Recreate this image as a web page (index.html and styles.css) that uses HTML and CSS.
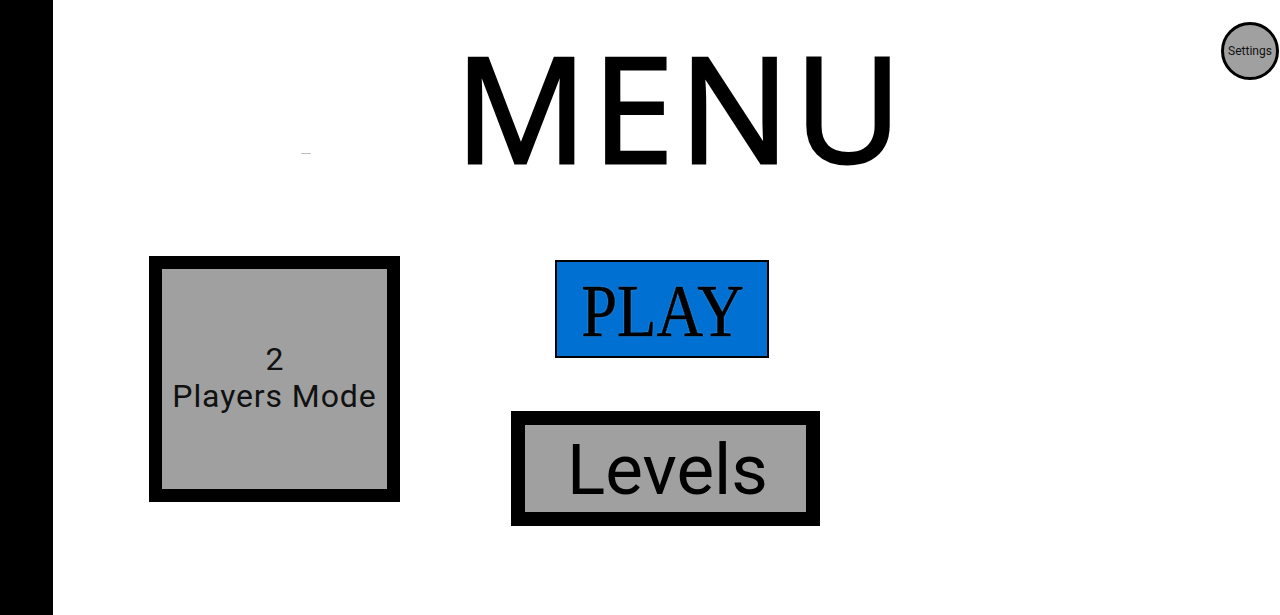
FILE: index.html
```html
<!DOCTYPE html>
<html>
<head>
<meta charset="utf-8">
<link rel="stylesheet" href="styles.css">
</head>
<body>
<div class="app">
  <div class="sidebar"></div>
  <main class="main">
    <h1 class="title">MENU</h1>
    <span class="speck"></span>
    <div class="content">
      <div class="mode-box">
        <span class="mode-num">2</span>
        <span class="mode-label">Players Mode</span>
      </div>
      <div class="actions">
        <div class="play"><span class="play-text">PLAY</span></div>
        <div class="levels">Levels</div>
      </div>
    </div>
    <div class="settings">Settings</div>
  </main>
</div>
</body>
</html>
```
FILE: styles.css
```css
html, body {
  margin: 0;
  padding: 0;
  background: #ffffff;
}
.app {
  display: flex;
  width: 1280px;
  height: 615px;
  overflow: hidden;
}
.sidebar {
  width: 53px;
  flex: none;
  background: #000000;
}
.main {
  position: relative;
  flex: 1;
  font-family: Roboto, "Liberation Sans", sans-serif;
  color: #000;
}
.title {
  margin: 0;
  padding-left: 402px;
  padding-top: 33px;
  height: 172px;
  box-sizing: border-box;
  font-family: "Open Sans", sans-serif;
  font-weight: 400;
  font-size: 147px;
  line-height: 1;
  letter-spacing: 5px;
  -webkit-text-stroke: 3px #000;
  color: #000;
  white-space: nowrap;
}
.speck {
  position: absolute;
  left: 248px;
  top: 153px;
  width: 10px;
  height: 1px;
  background: #bdbdbd;
}
.content {
  display: flex;
  align-items: flex-start;
  padding-left: 96px;
  margin-top: 84px;
}
.mode-box {
  width: 251px;
  height: 246px;
  box-sizing: border-box;
  border: 13px solid #000;
  background: #a0a0a0;
  display: flex;
  flex-direction: column;
  align-items: center;
  justify-content: center;
  font-size: 32px;
  line-height: 37px;
  color: #111;
  padding-bottom: 3px;
}
.mode-label {
  letter-spacing: 0.9px;
}
.actions {
  margin-left: 111px;
  display: flex;
  flex-direction: column;
  align-items: flex-start;
}
.play {
  margin-top: 4px;
  margin-left: 44px;
  width: 214px;
  height: 98px;
  box-sizing: border-box;
  border: 2px solid #000;
  background: #0070d2;
  display: flex;
  align-items: center;
  justify-content: center;
}
.play-text {
  font-family: "Liberation Serif", serif;
  font-size: 75px;
  line-height: 1;
  display: inline-block;
  transform: scaleX(0.86);
  color: #000;
  -webkit-text-stroke: 0.6px #000;
  text-shadow: 0 0 2px rgba(200, 220, 240, 0.6);
  padding-top: 2px;
}
.levels {
  margin-top: 53px;
  width: 309px;
  height: 115px;
  box-sizing: border-box;
  border: 14px solid #000;
  background: #a0a0a0;
  display: flex;
  align-items: center;
  justify-content: center;
  font-size: 71px;
  line-height: 1;
  color: #000;
  padding-top: 2px;
  padding-left: 4px;
}
.settings {
  position: absolute;
  top: 22px;
  right: 1px;
  width: 58px;
  height: 58px;
  box-sizing: border-box;
  border: 3px solid #000;
  border-radius: 50%;
  background: #a0a0a0;
  display: flex;
  align-items: center;
  justify-content: center;
  font-size: 12px;
  color: #111;
}
```
